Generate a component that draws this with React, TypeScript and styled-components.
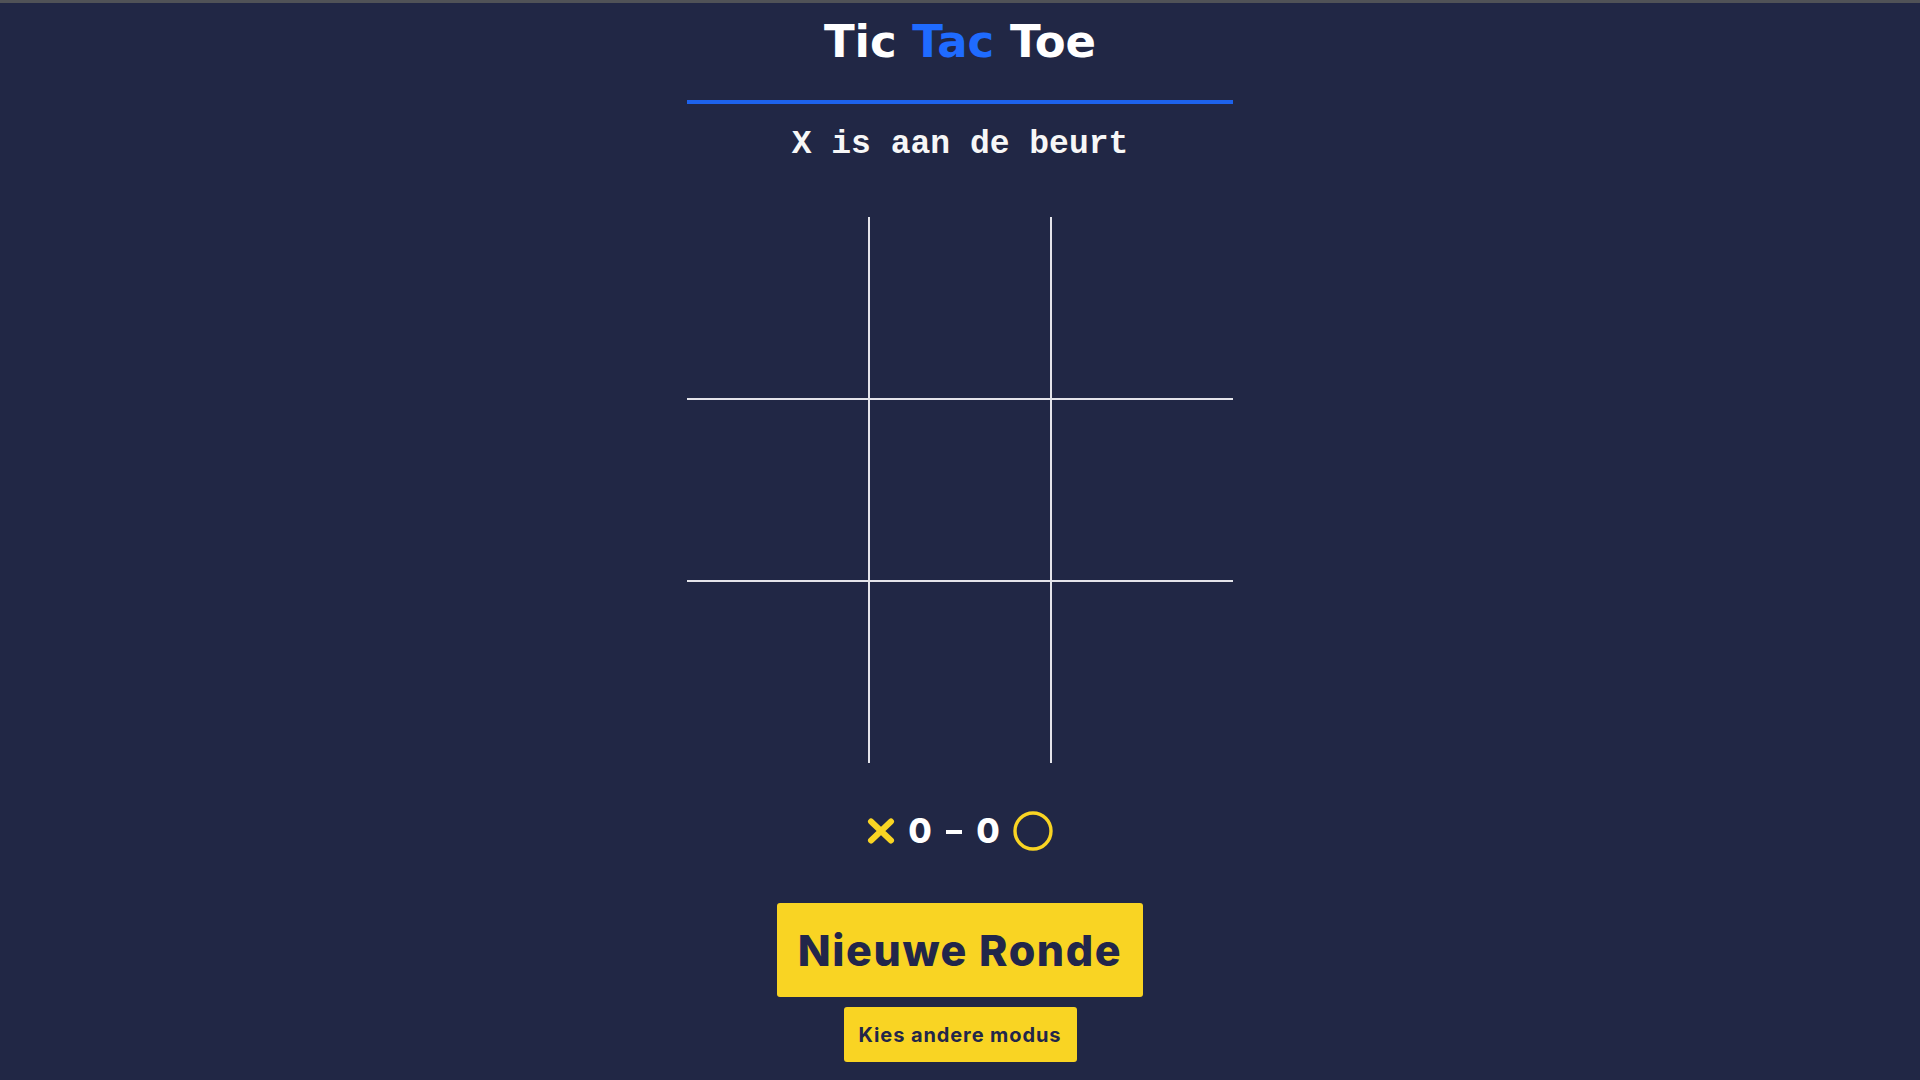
import React from "react";
import styled, { createGlobalStyle } from "styled-components";

const NAVY = "#212745";
const YELLOW = "#f9d423";
const BLUE = "#1f6bff";

const GlobalStyle = createGlobalStyle`
  html, body {
    margin: 0;
    padding: 0;
    background: ${NAVY};
    min-height: 100%;
  }
  body {
    font-family: "DejaVu Sans", Verdana, sans-serif;
  }
`;

const Page = styled.div`
  min-height: 1080px;
  background: ${NAVY};
  display: flex;
  flex-direction: column;
`;

const TopStrip = styled.div`
  height: 3px;
  background: #505257;
`;

const Column = styled.main`
  width: 546px;
  margin: 0 auto;
  display: flex;
  flex-direction: column;
  align-items: center;
`;

const Header = styled.header`
  align-self: stretch;
  padding: 16px 0 36px;
  border-bottom: 4px solid #1d62ec;
  display: flex;
  justify-content: center;
`;

const Title = styled.h1`
  margin: 0;
  font-family: "DejaVu Sans", Verdana, sans-serif;
  font-weight: 700;
  font-size: 45px;
  line-height: 45px;
  color: #ffffff;
`;

const Accent = styled.span`
  color: ${BLUE};
`;

const Status = styled.p`
  margin: 24px 0 0;
  font-family: "Liberation Mono", "Courier New", monospace;
  font-weight: 700;
  font-size: 33px;
  line-height: 33px;
  color: #f7f7f7;
`;

const Board = styled.div`
  margin-top: 56px;
  width: 546px;
  height: 546px;
  display: grid;
  grid-template-columns: repeat(3, 1fr);
  grid-template-rows: repeat(3, 1fr);
  gap: 2px;
  background: #e4e4ea;
`;

const Cell = styled.button`
  border: none;
  padding: 0;
  margin: 0;
  background: ${NAVY};
  cursor: pointer;
`;

const ScoreRow = styled.div`
  margin-top: 48px;
  height: 40px;
  display: flex;
  align-items: center;
`;

const ScoreText = styled.span`
  font-family: Inter, "Open Sans", sans-serif;
  font-weight: 800;
  font-size: 34px;
  line-height: 40px;
  color: #ffffff;
  display: flex;
  align-items: center;
`;

const Digit = styled.span`
  width: 26px;
  text-align: center;
`;

const Dash = styled.span`
  width: 16px;
  height: 4px;
  background: #ffffff;
  margin: 2px 13px 0;
`;

const IconBox = styled.span<{ $gap: number; $side: "left" | "right" }>`
  display: inline-flex;
  ${(p) => (p.$side === "left" ? `margin-right: ${p.$gap}px;` : `margin-left: ${p.$gap}px;`)}
`;

const Button = styled.button<{ $size: "large" | "small" }>`
  background: ${YELLOW};
  color: #22264a;
  border: none;
  border-radius: 3px;
  font-family: Inter, "Open Sans", sans-serif;
  cursor: pointer;
  display: flex;
  align-items: center;
  justify-content: center;
  padding: 0;
  ${(p) =>
    p.$size === "large"
      ? `
    margin-top: 52px;
    width: 366px;
    height: 94px;
    font-size: 43px;
    font-weight: 800;
    letter-spacing: 1.6px;
  `
      : `
    margin-top: 10px;
    width: 233px;
    height: 55px;
    font-size: 20px;
    font-weight: 700;
    letter-spacing: 0.9px;
  `}
`;

const XMark = () => (
  <svg width="28" height="26" viewBox="0 0 28 26">
    <path
      d="M4 3.5 L24 22.5 M24 3.5 L4 22.5"
      stroke={YELLOW}
      strokeWidth="6"
      strokeLinecap="round"
      fill="none"
    />
  </svg>
);

const OMark = () => (
  <svg width="40" height="40" viewBox="0 0 40 40">
    <circle cx="20" cy="20" r="18" stroke={YELLOW} strokeWidth="3.4" fill="none" />
  </svg>
);

export default function App() {
  const cells = Array.from({ length: 9 }, (_, i) => i);
  return (
    <>
      <GlobalStyle />
      <Page>
        <TopStrip />
        <Column>
          <Header>
            <Title>
              Tic <Accent>Tac</Accent> Toe
            </Title>
          </Header>
          <Status>X is aan de beurt</Status>
          <Board>
            {cells.map((i) => (
              <Cell key={i} aria-label={`vak ${i + 1}`} />
            ))}
          </Board>
          <ScoreRow>
            <IconBox $side="left" $gap={12}>
              <XMark />
            </IconBox>
            <ScoreText>
              <Digit>0</Digit>
              <Dash />
              <Digit>0</Digit>
            </ScoreText>
            <IconBox $side="right" $gap={12}>
              <OMark />
            </IconBox>
          </ScoreRow>
          <Button $size="large">Nieuwe Ronde</Button>
          <Button $size="small">Kies andere modus</Button>
        </Column>
      </Page>
    </>
  );
}
